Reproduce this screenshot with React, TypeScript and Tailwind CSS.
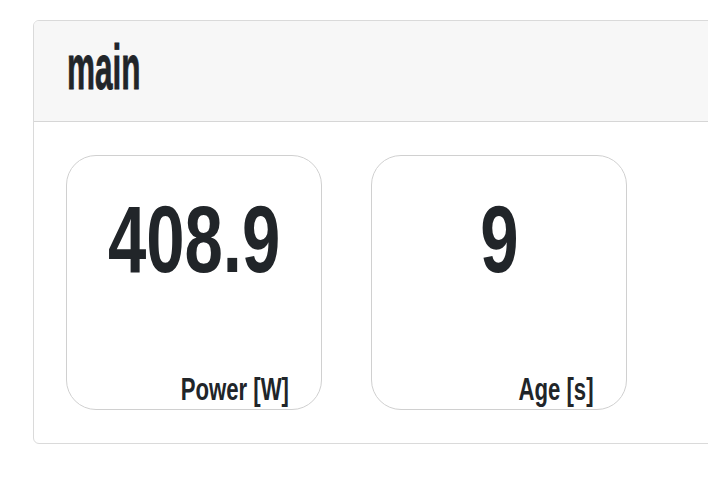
const FONT = "font-['Liberation_Sans',Arial,sans-serif]";

function Tile({ value, label }: { value: string; label: string }) {
  return (
    <div className="flex h-[255px] w-[256px] flex-col rounded-[30px] border border-[#d0d0d0] bg-white px-[32px] pb-[6px] pt-[42px]">
      <div className="flex justify-center">
        <span className="inline-block origin-center scale-x-[0.82] scale-y-[1.12] text-[84px] font-bold leading-none text-[#212529]">
          {value}
        </span>
      </div>
      <div className="mt-auto flex justify-end">
        <span className="inline-block origin-right scale-x-[0.82] scale-y-[1.18] text-[27px] font-bold leading-none text-[#212529]">
          {label}
        </span>
      </div>
    </div>
  );
}

export default function App() {
  return (
    <div className={`h-[482px] w-[708px] overflow-hidden bg-white pl-[33px] pt-[20px] ${FONT}`}>
      <div className="w-[740px] overflow-hidden rounded-[6px] border border-[#dadada] bg-white">
        <div className="h-[101px] border-b border-[#d6d6d6] bg-[#f7f7f7] pl-[33px] pt-[26px]">
          <span className="inline-block origin-left scale-x-[0.75] scale-y-[1.5] text-[42px] font-bold leading-none text-[#212529] [-webkit-text-stroke:0.6px_#212529]">
            main
          </span>
        </div>
        <div className="flex gap-[49px] px-[32px] py-[33px]">
          <Tile value="408.9" label="Power [W]" />
          <Tile value="9" label="Age [s]" />
        </div>
      </div>
    </div>
  );
}
